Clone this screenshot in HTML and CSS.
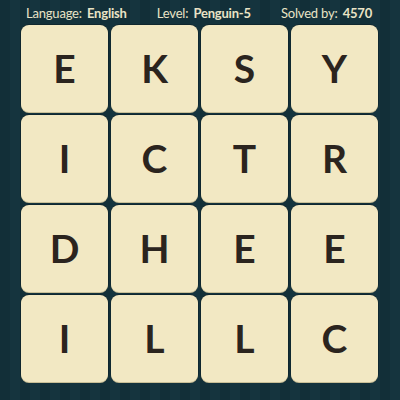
FILE: index.html
```html
<!DOCTYPE html>
<html>
<head>
<meta charset="utf-8">
<link rel="stylesheet" href="styles.css">
</head>
<body>
<div class="page">
  <div class="header">
    <span class="item">Language: <b>English</b></span>
    <span class="item">Level: <b>Penguin-5</b></span>
    <span class="item">Solved by: <b>4570</b></span>
  </div>
  <div class="grid">
    <div class="tile">E</div><div class="tile">K</div><div class="tile">S</div><div class="tile">Y</div>
    <div class="tile">I</div><div class="tile">C</div><div class="tile">T</div><div class="tile">R</div>
    <div class="tile">D</div><div class="tile">H</div><div class="tile">E</div><div class="tile">E</div>
    <div class="tile">I</div><div class="tile">L</div><div class="tile">L</div><div class="tile">C</div>
  </div>
</div>
</body>
</html>
```
FILE: styles.css
```css
html, body {
  margin: 0;
  padding: 0;
}
body {
  width: 400px;
  height: 400px;
  overflow: hidden;
  background-color: #13303a;
  background-image: repeating-linear-gradient(90deg, #122f38 0px, #122f38 10px, #15343e 10px, #15343e 20px);
  font-family: Lato, "Open Sans", sans-serif;
}
.page {
  display: flex;
  flex-direction: column;
}
.header {
  height: 25px;
  display: flex;
  justify-content: space-between;
  align-items: center;
  padding: 0 28px 0 26px;
  color: #e9e3c6;
  font-size: 13px;
  letter-spacing: -0.2px;
  font-weight: 400;
  box-sizing: border-box;
}
.header b {
  font-weight: 700;
  margin-left: 2px;
}
.grid {
  display: grid;
  grid-template-columns: repeat(4, 87px);
  grid-template-rows: repeat(4, 87px);
  gap: 3px;
  padding-left: 21px;
}
.tile {
  background: #f2e8c3;
  border-radius: 8px;
  box-shadow: 0 1px 0 #c9bf97, 0 0 0 0.5px #0c1d22;
  display: flex;
  align-items: center;
  justify-content: center;
  color: #2b241e;
  font-size: 39px;
  font-weight: 700;
  line-height: 1;
}
```
